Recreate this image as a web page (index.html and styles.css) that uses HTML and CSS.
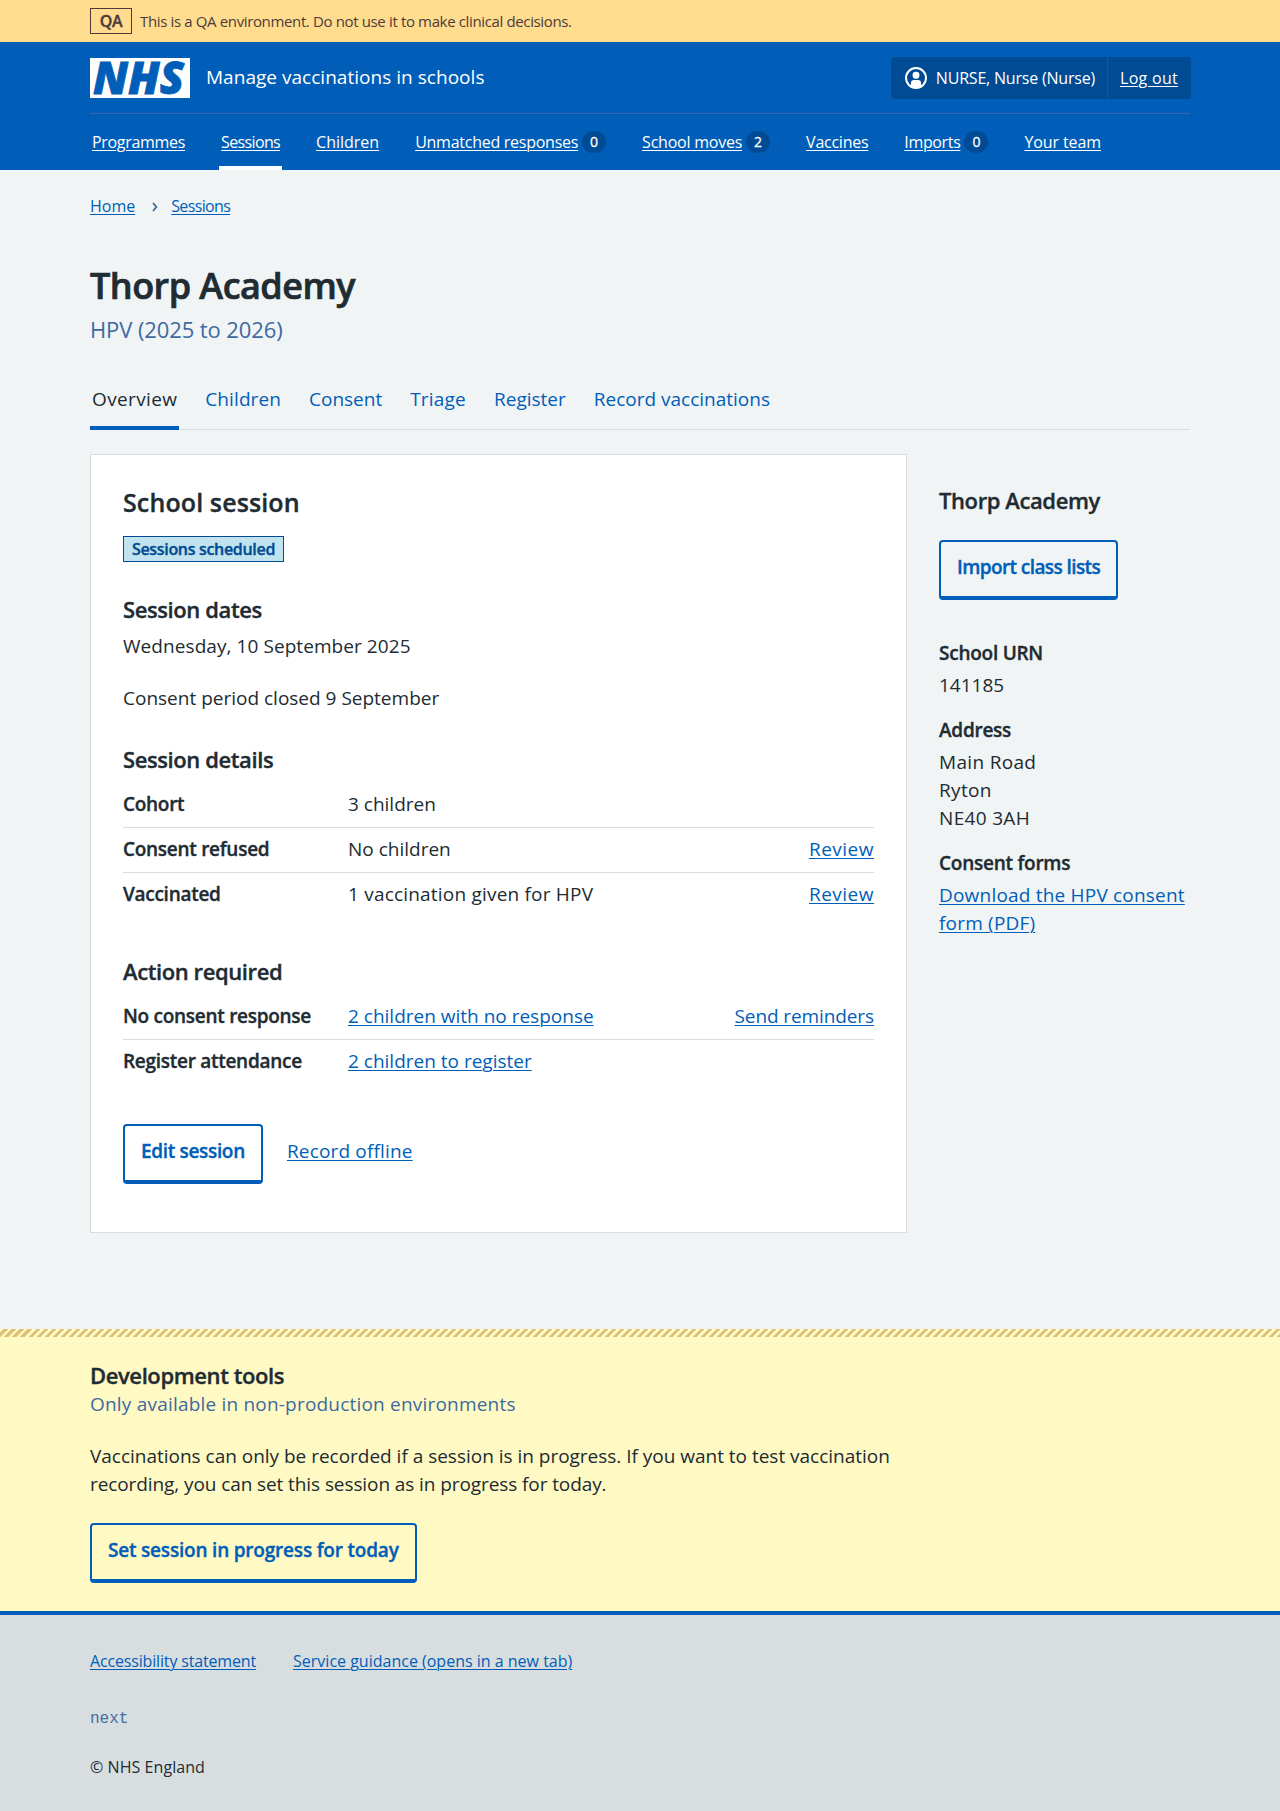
FILE: index.html
```html
<!DOCTYPE html>
<html lang="en">
<head>
<meta charset="utf-8">
<title>Thorp Academy – Manage vaccinations in schools</title>
<link rel="stylesheet" href="styles.css">
</head>
<body>
<div class="environment">
  <div class="container environment-inner">
    <strong class="environment-tag">QA</strong>
    <span>This is a QA environment. Do not use it to make clinical decisions.</span>
  </div>
</div>

<header class="header">
  <div class="container">
    <div class="header-top">
      <svg class="logo" viewBox="0 0 100 40" role="img" aria-label="NHS">
        <rect width="100" height="40" fill="#fff"/>
        <text class="logo-text" x="3" y="36.3" textLength="91" lengthAdjust="spacingAndGlyphs">NHS</text>
      </svg>
      <span class="service-name">Manage vaccinations in schools</span>
      <div class="account">
        <span class="account-user">
          <svg class="account-icon" width="22" height="22" viewBox="0 0 22 22" aria-hidden="true">
            <circle cx="11" cy="11" r="10" fill="none" stroke="#fff" stroke-width="2"/>
            <rect x="7.6" y="4.8" width="6.8" height="7" rx="3" fill="#fff"/>
            <path d="M6 19v-3a3 3 0 0 1 3-3h4a3 3 0 0 1 3 3v3a10 10 0 0 1-10 0z" fill="#fff"/>
          </svg>
          <span class="t-user">NURSE, Nurse (Nurse)</span>
        </span>
        <a class="account-logout" href="#">Log out</a>
      </div>
    </div>
    <nav class="nav">
      <span class="nav-item"><a class="t-programmes" href="#">Programmes</a></span>
      <span class="nav-item nav-current"><a class="t-sessions" href="#">Sessions</a></span>
      <span class="nav-item"><a href="#">Children</a></span>
      <span class="nav-item"><a class="t-unmatched" href="#">Unmatched responses</a><span class="count">0</span></span>
      <span class="nav-item"><a class="t-moves" href="#">School moves</a><span class="count">2</span></span>
      <span class="nav-item"><a class="t-vaccines" href="#">Vaccines</a></span>
      <span class="nav-item"><a class="t-imports" href="#">Imports</a><span class="count">0</span></span>
      <span class="nav-item"><a class="t-m1" href="#">Your team</a></span>
    </nav>
  </div>
</header>

<main class="container main">
  <nav class="breadcrumb">
    <a href="#">Home</a>
    <svg class="chevron" width="6" height="10" viewBox="0 0 6 10" aria-hidden="true"><path d="M1 1l3.4 4L1 9" fill="none" stroke="#3d6a9f" stroke-width="1.8"/></svg>
    <a class="t-sessions" href="#">Sessions</a>
  </nav>

  <h1 class="title">Thorp Academy</h1>
  <p class="caption">HPV (2025 to 2026)</p>

  <nav class="tabs">
    <a class="tab tab-current t-p36" href="#">Overview</a>
    <a class="tab t-p1" href="#">Children</a>
    <a class="tab" href="#">Consent</a>
    <a class="tab t-p2" href="#">Triage</a>
    <a class="tab" href="#">Register</a>
    <a class="tab" href="#">Record vaccinations</a>
  </nav>

  <div class="columns">
    <section class="card">
      <h2 class="card-title">School session</h2>
      <strong class="tag">Sessions scheduled</strong>

      <h3 class="heading">Session dates</h3>
      <p class="dates">Wednesday, 10 September 2025</p>
      <p class="consent-period">Consent period closed 9 September</p>

      <h3 class="heading">Session details</h3>
      <dl class="summary">
        <div class="row"><dt>Cohort</dt><dd>3 children</dd></div>
        <div class="row"><dt>Consent refused</dt><dd>No children</dd><dd><a class="t-p5" href="#">Review</a></dd></div>
        <div class="row"><dt>Vaccinated</dt><dd class="t-p2">1 vaccination given for HPV</dd><dd><a class="t-p5" href="#">Review</a></dd></div>
      </dl>

      <h3 class="heading heading-actions">Action required</h3>
      <dl class="summary">
        <div class="row"><dt>No consent response</dt><dd><a href="#">2 children with no response</a></dd><dd><a class="t-m1" href="#">Send reminders</a></dd></div>
        <div class="row"><dt>Register attendance</dt><dd><a href="#">2 children to register</a></dd></div>
      </dl>

      <div class="button-group">
        <a class="button button-edit" href="#">Edit session</a>
        <a class="t-p15" href="#">Record offline</a>
      </div>
    </section>

    <aside class="sidebar">
      <h3 class="heading sidebar-heading">Thorp Academy</h3>
      <a class="button button-import" href="#">Import class lists</a>
      <dl class="facts">
        <dt>School URN</dt>
        <dd>141185</dd>
        <dt>Address</dt>
        <dd class="t-p3">Main Road<br>Ryton<br>NE40 3AH</dd>
        <dt>Consent forms</dt>
        <dd><a class="t-p2" href="#">Download the HPV consent form (PDF)</a></dd>
      </dl>
    </aside>
  </div>
</main>

<section class="devtools">
  <div class="container">
    <h3 class="heading devtools-heading">Development tools</h3>
    <p class="devtools-hint t-p2">Only available in non-production environments</p>
    <p class="devtools-text"><span class="t-m01">Vaccinations can only be recorded if a session is in progress. If you want to test vaccination</span> recording, you can set this session as in progress for today.</p>
    <a class="button" href="#">Set session in progress for today</a>
  </div>
</section>

<footer class="footer">
  <div class="container">
    <div class="footer-links">
      <a class="t-access" href="#">Accessibility statement</a>
      <a href="#">Service guidance (opens in a new tab)</a>
    </div>
    <p class="version">next</p>
    <p class="copyright">© NHS England</p>
  </div>
</footer>
</body>
</html>
```
FILE: styles.css
```css
* { box-sizing: border-box; }

body {
  margin: 0;
  background: #f0f4f5;
  color: #212b32;
  font-family: "Open Sans", "Noto Sans", sans-serif;
  font-size: 19px;
  line-height: 28px;
}

h1, h2, h3, p, dl, dd { margin: 0; }
h1, h2, h3, dt, strong, .button {
  font-weight: 600;
  -webkit-text-stroke: 0.35px currentColor;
}
h1 { -webkit-text-stroke-width: 0.7px; }

a {
  color: #005eb8;
  text-decoration: underline;
  text-decoration-thickness: 1px;
  text-underline-offset: 2px;
}

.container { width: 1100px; margin: 0 auto; }

/* Environment banner */
.environment { background: #ffdc8e; color: #4d3b3b; }
.environment-inner {
  display: flex;
  align-items: center;
  gap: 8px;
  height: 42px;
  font-size: 15px;
  letter-spacing: -0.36px;
}
.environment-tag {
  width: 42px;
  height: 26px;
  border: 1px solid #4d3b3b;
  font-size: 16px;
  line-height: 24px;
  text-align: center;
}

/* Header */
.header { background: #005eb8; color: #fff; }
.header a { color: #fff; }
.header-top {
  display: flex;
  align-items: center;
  height: 72px;
  border-bottom: 1px solid #3a66ab;
}
.logo { display: block; width: 100px; height: 40px; overflow: visible; }
.logo-text {
  fill: #005eb8;
  stroke: #005eb8;
  stroke-width: 0.8px;
  font: italic 800 45px "Open Sans", sans-serif;
}
.service-name { margin: 0 auto 2px 16px; letter-spacing: 0.03px; }
.account {
  display: flex;
  height: 42px;
  margin-right: -1px;
  padding: 1px 0;
  border-radius: 4px;
  background: #004b93;
  font-size: 16px;
  line-height: 40px;
}
.account-user {
  display: flex;
  align-items: center;
  gap: 9px;
  padding: 0 12px 0 14px;
  border-right: 1px solid #005eb8;
}
.account-logout { padding: 0 13px 0 12px; letter-spacing: 0.29px; }

.nav {
  display: flex;
  gap: 32px;
  height: 56px;
  font-size: 16px;
  line-height: 24px;
}
.nav-item {
  display: flex;
  align-items: center;
  gap: 4px;
  padding: 0 2px;
}
.nav-current { box-shadow: inset 0 -4px 0 #fff; }
.count {
  width: 24px;
  height: 22px;
  border-radius: 12px;
  background: #004b93;
  font-size: 14px;
  line-height: 22px;
  text-align: center;
  -webkit-text-stroke: 0.3px currentColor;
}

/* Page heading */
.main { height: 1159px; padding-top: 24px; }
.breadcrumb {
  display: flex;
  align-items: center;
  font-size: 16px;
  line-height: 24px;
}
.chevron { margin: 1px 13px 0 17px; }
.title {
  margin-top: 46px;
  font-size: 36px;
  line-height: 44px;
  letter-spacing: -0.52px;
}
.caption {
  margin-top: 5px;
  color: #3d6a9f;
  font-size: 22px;
  line-height: 32px;
  letter-spacing: -0.1px;
}

.tabs {
  display: flex;
  gap: 24px;
  margin-top: 40px;
  box-shadow: inset 0 -1px 0 #d8dde0;
}
.tab {
  padding: 0 2px 13px;
  border-bottom: 4px solid transparent;
  text-decoration: none;
}
.tab-current { border-color: #005eb8; color: #212b32; }

/* Session card */
.columns {
  display: grid;
  grid-template-columns: 817px 251px;
  gap: 32px;
  align-items: start;
  margin-top: 24px;
}
.card {
  padding: 31px 32px 48px;
  border: 1px solid #d8dde0;
  background: #fff;
}
.card-title { font-size: 25px; line-height: 32px; letter-spacing: 0.12px; }
.tag {
  display: block;
  width: 161px;
  height: 26px;
  margin-top: 18px;
  border: 1px solid #004b93;
  background: #c0e3ef;
  color: #004b93;
  font-size: 16px;
  line-height: 24px;
  letter-spacing: -0.32px;
  text-align: center;
}
.heading {
  margin-top: 32px;
  font-size: 22px;
  line-height: 31px;
  letter-spacing: -0.4px;
}
.heading-actions { margin-top: 39px; }
.dates { margin-top: 7px; letter-spacing: 0.07px; }
.consent-period { margin-top: 24px; }

.summary { margin-top: 8px; }
.row {
  display: grid;
  grid-template-columns: 225px 1fr auto;
  padding: 7px 0 9px;
}
.row + .row { border-top: 1px solid #d8dde0; }
.row dt { letter-spacing: -0.28px; }

.button-group {
  display: flex;
  align-items: center;
  gap: 24px;
  margin-top: 40px;
}
.button-group > a:last-child { margin-bottom: 6px; }
.button {
  display: inline-block;
  padding: 11px 16px 15px;
  border: 2px solid #005eb8;
  border-bottom-width: 4px;
  border-radius: 4px;
  letter-spacing: -0.2px;
  text-decoration: none;
  vertical-align: top;
}
.button-edit { letter-spacing: -0.33px; }
.button-import { margin-top: 24px; letter-spacing: -0.59px; }

/* Sidebar */
.sidebar { padding-top: 31px; }
.sidebar-heading { margin-top: 0; }
.facts { margin-top: 39px; }
.facts dt { letter-spacing: -0.25px; }
.facts dd { margin-top: 4px; }
.facts dd + dt { margin-top: 17px; }

/* Development tools */
.devtools {
  height: 282px;
  padding-top: 31px;
  background:
    repeating-linear-gradient(135deg, #fff9c4 0 2.828px, #dfc27a 2.828px 5.657px) 0 0 / 100% 8px no-repeat,
    #fff9c4;
}
.devtools-heading { margin-top: 0; line-height: 30px; }
.devtools-hint { color: #3d6a9f; }
.devtools-text { width: 817px; margin: 24px 0 25px; letter-spacing: -0.09px; }

/* Footer */
.footer {
  height: 200px;
  padding-top: 34px;
  border-top: 4px solid #005eb8;
  background: #d8dde0;
  font-size: 16px;
  line-height: 24px;
}
.footer-links { display: flex; gap: 37px; }
.version {
  margin-top: 34px;
  color: #41709f;
  font-family: "Liberation Mono", monospace;
}
.copyright { margin-top: 24px; letter-spacing: 0.06px; }

/* Tracking */
.t-user { letter-spacing: -0.2px; }
.t-programmes { letter-spacing: -0.31px; }
.t-sessions { letter-spacing: -0.64px; }
.t-unmatched { letter-spacing: -0.26px; }
.t-moves { letter-spacing: -0.23px; }
.t-vaccines { letter-spacing: -0.25px; }
.t-imports { letter-spacing: -0.35px; }
.t-access { letter-spacing: -0.16px; }
.t-p5 { letter-spacing: 0.5px; }
.t-p36 { letter-spacing: 0.36px; }
.t-p3 { letter-spacing: 0.32px; }
.t-p2 { letter-spacing: 0.2px; }
.t-p15 { letter-spacing: 0.17px; }
.t-p1 { letter-spacing: 0.1px; }
.t-m01 { letter-spacing: -0.015px; }
.t-m1 { letter-spacing: -0.1px; }
```
